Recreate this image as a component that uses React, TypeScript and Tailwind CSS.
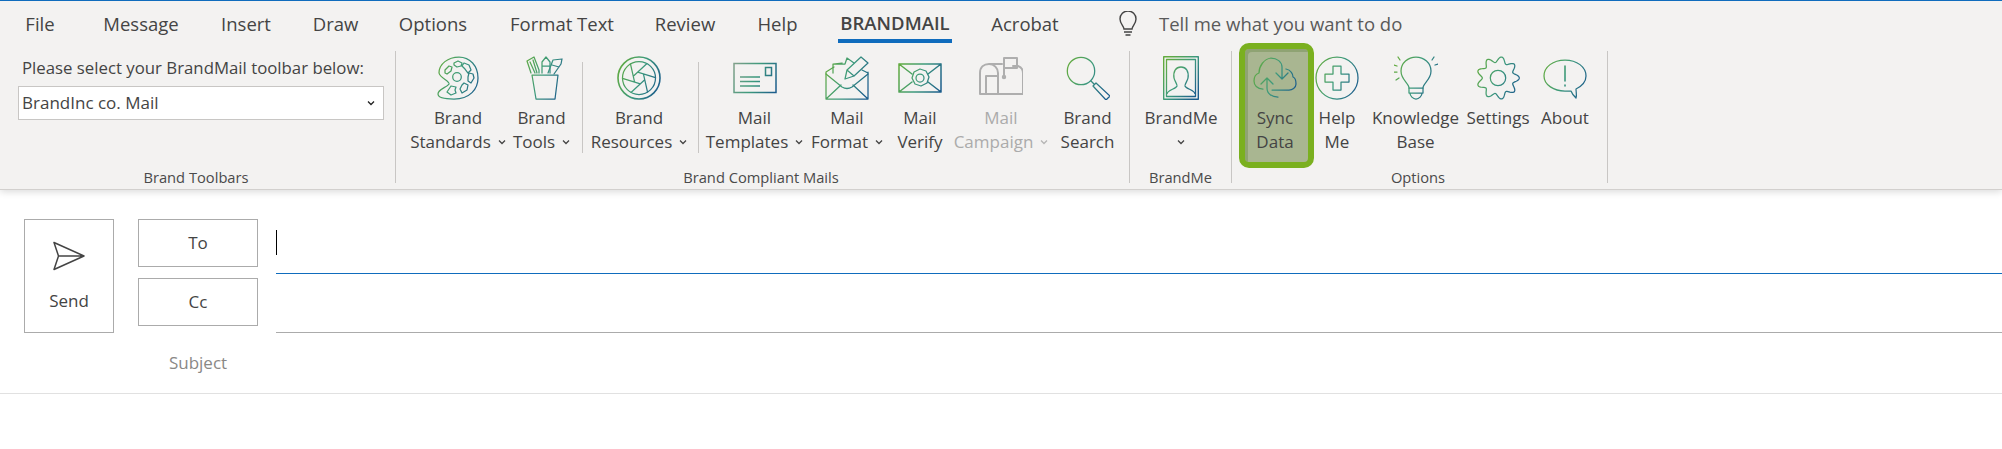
import { ReactNode, useId } from "react";

const Icon = ({ children, muted }: { children: ReactNode; muted?: boolean }) => {
  const id = useId();
  return (
    <svg width="44" height="44" viewBox="0 0 44 44" fill="none" strokeWidth="1.25" strokeLinejoin="round" strokeLinecap="round">
      <defs>
        <linearGradient id={id} gradientUnits="userSpaceOnUse" x1="0" y1="12" x2="44" y2="30">
          <stop offset="0" stopColor="#62ab3f" />
          <stop offset="0.5" stopColor="#3d9a7c" />
          <stop offset="1" stopColor="#1c5d8c" />
        </linearGradient>
      </defs>
      <g stroke={muted ? "#aeaeae" : `url(#${id})`}>{children}</g>
    </svg>
  );
};

const Chevron = ({ color = "#444" }: { color?: string }) => (
  <svg width="8" height="6" viewBox="0 0 8 6" fill="none" className="shrink-0">
    <path d="M1 1.500 4 4.500 7 1.500" stroke={color} strokeWidth="1.3" />
  </svg>
);

const PaletteIcon = () => (
  <Icon>
    <path d="M23 1C34 1 42 10 42 22 42 33 34 43 18 43 8 43 2 41 2 38 2 33 10 32 13 28 14 25 4 22 3 17 3 8 12 1 23 1Z" />
    <circle cx="21" cy="21" r="4.300" />
    <path d="M9 14l4-4 3 1-1 4-4 3-2-1ZM18 7l4-2 4 2-1 3-4 1-3-2ZM28 7l5 2 2 5-3 3-3-4-3-3ZM33 17l4 1 1 4-3 5-3-2 0-4ZM28 27l4 2-1 5-5 3-2-4 2-4ZM15 30l5 1-1 3 1 3-5 2-4-3 2-3Z" />
  </Icon>
);

const ToolsIcon = () => (
  <Icon>
    <path d="M12 19h26l-3 24H16Z" />
    <path d="M11 17 7 5l7-4 5 13v3M10 6l5 11M13 4l4 13" />
    <path d="M22 17V6l4-5 4 5v11M22 10h8" />
    <path d="M28 17l5-13 9-1-1 5-7 10M32 9l7 2" />
  </Icon>
);

// six straight blades around a small hexagon
const apertureBlades = Array.from({ length: 6 }, (_, k) => {
  const a = (k * Math.PI) / 3 + 0.3;
  const b = a + Math.PI / 3;
  const x0 = 6 * Math.cos(a);
  const y0 = 6 * Math.sin(a);
  const dx = 6 * Math.cos(b) - x0;
  const dy = 6 * Math.sin(b) - y0;
  const t = 18.660 / 6;
  return `M${(22 + x0).toFixed(2)} ${(22 + y0).toFixed(2)} L${(22 + x0 + dx * t).toFixed(2)} ${(22 + y0 + dy * t).toFixed(2)}`;
}).join(" ");

const ApertureIcon = () => (
  <Icon>
    <circle cx="22" cy="22" r="21" strokeWidth="1.600" />
    <circle cx="22" cy="22" r="16.500" />
    <path d={apertureBlades} />
  </Icon>
);

const PostcardIcon = () => (
  <svg width="44" height="44" viewBox="0 0 44 44" fill="none">
    <defs>
      <linearGradient id="postcard" gradientUnits="userSpaceOnUse" x1="0" y1="12" x2="44" y2="30">
        <stop offset="0" stopColor="#7fa08a" />
        <stop offset="0.5" stopColor="#3d9a7c" />
        <stop offset="1" stopColor="#1c5d8c" />
      </linearGradient>
    </defs>
    <g stroke="url(#postcard)" strokeWidth="1.500">
      <path d="M1 7.500h42v29H1Z" />
      <path d="M32.500 11.500h6v8h-6Z" />
      <path d="M7 21h20M7 25.500h20M7 30h20" />
    </g>
  </svg>
);

const EnvelopePenIcon = () => (
  <Icon>
    <path d="M1 16v27h42V16M1 43l15-14M43 43 28 29M1 16l8-5M37 14l6 3" />
    <path d="M1 18 17 31q5 3 10 0L43 18" />
    <path d="M8 17V8h12l2-6 7 5M8 8l9-1" />
    <path d="M20 23l2-9L36 1l7 6-14 13-9 3ZM22 14l7 6" />
  </Icon>
);

const VerifyIcon = () => (
  <Icon>
    <path d="M1 8h42v28H1ZM1 8l13 10M43 8 30 18M1 36l13-10M43 36 30 26" strokeWidth="1.500" />
    <path d="M16 16l6-3 6 2 3 6-2 6-6 3-6-2-3-6Z" />
    <circle cx="22" cy="22" r="4" />
  </Icon>
);

const MailboxIcon = () => (
  <Icon muted>
    <path d="M1 38V17C1 11 5 8 10 8h13M10 8c5 0 9 4 9 9v21M1 38h43V17c0-3-2-6-5-7H34" strokeWidth="2" />
    <path d="M7 38V20h11" strokeWidth="2" />
    <path d="M25 21V2h13v10H25" strokeWidth="2" />
    <circle cx="25" cy="21" r="1.600" fill="#aeaeae" />
  </Icon>
);

const SearchIcon = () => (
  <Icon>
    <circle cx="15" cy="15" r="13.700" />
    <path d="M25 25l3 3M27 30l3-3 14 13-4 4Z" />
  </Icon>
);

const BrandMeIcon = () => (
  <svg width="36" height="44" viewBox="0 0 36 44" fill="none">
    <defs>
      <linearGradient id="brandme" gradientUnits="userSpaceOnUse" x1="0" y1="10" x2="36" y2="34">
        <stop offset="0" stopColor="#62ab3f" />
        <stop offset="0.5" stopColor="#3d9a7c" />
        <stop offset="1" stopColor="#1c5d8c" />
      </linearGradient>
    </defs>
    <g stroke="url(#brandme)" strokeWidth="1.300" strokeLinejoin="round">
      <path d="M.7.7h34.600v42.600H.7Z" strokeWidth="1.400" />
      <path d="M3.500 3.500h29v37h-29Z" />
      <path d="M4 38c0-4 9-5 10-8 .4-2-2.500-5-3-8-1-7 2-11 7-11s8 4 7 11c-.5 3-3.400 6-3 8 1 3 10 4 10 8" />
    </g>
  </svg>
);

const SyncIcon = () => (
  <Icon>
    <path d="M10 33C4 33 1 29 1 25 1 21 3 18 6 17 6 10 11 3 18 2 24 2 29 6 29 11V23M23 17l6 6 6-6" />
    <path d="M33 13C38 14 40 18 40 21 43 22 43 25 43 28 43 32 39 34 36 34H19" />
    <path d="M14 22V32C14 38 19 41 25 41M8 28l6-6 6 6" />
  </Icon>
);

const HelpIcon = () => (
  <Icon>
    <circle cx="22" cy="22" r="21" />
    <path d="M18 10h8v8h8v8h-8v8h-8v-8h-8v-8h8Z" />
  </Icon>
);

const BulbIcon = () => (
  <Icon>
    <path d="M15 32c0-5-8-8-8-17C7 7 14 1 22 1s15 6 15 14c0 9-8 12-8 17Z" />
    <path d="M15 32v5h14v-5M16 37c0 3 3 6 6 6s6-3 6-6" />
    <path d="M0 9l3 1M0 16h3M2 24l3-2M4 1l2 3M40 1l-2 3M41 9l3-1" />
  </Icon>
);

const gearPath = Array.from({ length: 181 }, (_, i) => {
  const a = (i / 180) * Math.PI * 2;
  const r = 18.500 + 2.800 * Math.cos(9 * a);
  return `${i === 0 ? "M" : "L"}${(22 + r * Math.cos(a)).toFixed(2)} ${(22 + r * Math.sin(a)).toFixed(2)}`;
}).join(" ");

const GearIcon = () => (
  <Icon>
    <path d={gearPath} />
    <circle cx="22" cy="22" r="7.700" />
  </Icon>
);

const AboutIcon = () => (
  <Icon>
    <path d="M22 4C10 4 1 11 1 20c0 9 10 15 21 15h6c1 3 3 5 5 7 1-3 0-6 0-9 6-3 10-8 10-13C43 11 34 4 22 4Z" />
    <path d="M22 10v15M22 29v1" strokeWidth="1.600" />
  </Icon>
);

const RibbonButton = ({ className, icon, lines, chevron, muted, row }: { className: string; icon: ReactNode; lines: string[]; chevron?: boolean; muted?: boolean; row?: boolean }) => (
  <div className={`relative z-10 flex flex-col items-center whitespace-nowrap leading-[24px] ${muted ? "text-[#ababab]" : ""} ${className}`}>
    <div className="flex h-[50px] items-center justify-center">{icon}</div>
    <div className="mt-[3px]">{lines[0]}</div>
    {lines[1] && (
      <div className="flex items-center gap-[7px]">
        {lines[1]}
        {chevron && <Chevron color={muted ? "#b5b5b5" : "#444"} />}
      </div>
    )}
    {row && (
      <div className="flex h-[24px] items-center">
        <Chevron />
      </div>
    )}
  </div>
);

const Sep = ({ className }: { className: string }) => <div className={`mt-[9px] h-[91px] w-px shrink-0 bg-[#c8c6c4] ${className}`} />;

const GroupLabel = ({ text }: { text: string }) => (
  <div className="mt-auto pb-[1px] text-center text-[14.700px] leading-[10px] text-[#4a4a4a]">{text}</div>
);

const tabs = [
  { name: "File", cls: "ml-[25px] w-[30px]" },
  { name: "Message", cls: "ml-[48px] w-[76px]" },
  { name: "Insert", cls: "ml-[43px] w-[48px]" },
  { name: "Draw", cls: "ml-[43px] w-[45px]" },
  { name: "Options", cls: "ml-[40px] w-[70px]" },
  { name: "Format Text", cls: "ml-[43px] w-[102px]" },
  { name: "Review", cls: "ml-[42px] w-[60px]" },
  { name: "Help", cls: "ml-[43px] w-[39px]" },
];

export default function App() {
  return (
    <div className="min-h-[449px] bg-white font-['Open_Sans',sans-serif] text-[17px] text-[#444]">
      <div className="relative z-20 h-[190px] border-t border-b border-t-[#0f6cbd] border-b-[#d2d0ce] bg-[#f3f2f1] shadow-[0_2px_7px_rgba(0,0,0,0.14)]">
        <div className="flex h-[50px] text-[18.500px] whitespace-nowrap">
          {tabs.map((t) => (
            <div key={t.name} className={`flex h-[46px] items-center justify-center ${t.cls}`}>
              {t.name}
            </div>
          ))}
          <div className="ml-[41px] flex h-[42px] w-[114px] flex-col items-center justify-end">
            <div className="flex h-[32px] items-center font-semibold">BRANDMAIL</div>
            <div className="h-[4px] w-full bg-[#0f6cbd]" />
          </div>
          <div className="ml-[38px] flex h-[46px] w-[70px] items-center justify-center">Acrobat</div>
          <div className="ml-[58px] flex h-[46px] items-center">
            <svg width="20" height="26" viewBox="0 0 20 26" fill="none" stroke="#444" strokeWidth="1.400">
              <path d="M6 18c0-3-4-5-4-10a8 8 0 0 1 16 0c0 5-4 7-4 10ZM6 21h8M7.500 24h5" />
            </svg>
          </div>
          <div className="ml-[21px] flex h-[46px] items-center text-[#5a5a5a]">Tell me what you want to do</div>
        </div>

        <div className="flex h-[132px]">
          <div className="flex w-[396px] shrink-0 flex-col border-r border-[#c8c6c4] pt-[5px] pr-[21px] pl-[18px]">
            <div className="pl-[4px] text-[16.800px] leading-[24px] whitespace-nowrap">Please select your BrandMail toolbar below:</div>
            <div className="mt-[6px] flex h-[34px] w-[366px] shrink-0 items-center justify-between border border-[#c8c6c4] bg-white pr-[8px] pl-[3px] leading-[20px]">
              BrandInc co. Mail
              <Chevron color="#222" />
            </div>
            <GroupLabel text="Brand Toolbars" />
          </div>

          <div className="flex w-[734px] shrink-0 flex-col border-r border-[#c8c6c4]">
            <div className="flex pt-[2px]">
              <RibbonButton className="ml-[16px] w-[92px]" icon={<PaletteIcon />} lines={["Brand", "Standards"]} chevron />
              <RibbonButton className="ml-[10px] w-[55px]" icon={<ToolsIcon />} lines={["Brand", "Tools"]} chevron />
              <Sep className="ml-[13px]" />
              <RibbonButton className="ml-[10px] w-[92px]" icon={<ApertureIcon />} lines={["Brand", "Resources"]} chevron />
              <Sep className="ml-[13px]" />
              <RibbonButton className="ml-[9px] w-[93px]" icon={<PostcardIcon />} lines={["Mail", "Templates"]} chevron />
              <RibbonButton className="ml-[11px] w-[70px]" icon={<EnvelopePenIcon />} lines={["Mail", "Format"]} chevron />
              <RibbonButton className="ml-[16px] w-[44px]" icon={<VerifyIcon />} lines={["Mail", "Verify"]} />
              <RibbonButton className="ml-[12px] w-[94px]" icon={<MailboxIcon />} lines={["Mail", "Campaign"]} chevron muted />
              <RibbonButton className="ml-[14px] w-[51px]" icon={<SearchIcon />} lines={["Brand", "Search"]} />
            </div>
            <div className="mt-auto pr-[3px]">
              <GroupLabel text="Brand Compliant Mails" />
            </div>
          </div>

          <div className="flex w-[102px] shrink-0 flex-col border-r border-[#c8c6c4]">
            <div className="flex pt-[2px]">
              <RibbonButton className="ml-[16px] w-[70px]" icon={<BrandMeIcon />} lines={["BrandMe"]} row />
            </div>
            <GroupLabel text="BrandMe" />
          </div>

          <div className="flex w-[376px] shrink-0 flex-col border-r border-[#c8c6c4]">
            <div className="flex pt-[2px]">
              <div className="relative ml-[7px] w-[75px]">
                <div className="absolute -top-[10px] left-0 h-[125px] w-[75px] rounded-[10px] border-[6px] border-[#7ab01f] bg-[#a9b691] shadow-[inset_3px_3px_0_#8fa373]" />
                <RibbonButton className="w-[72px]" icon={<SyncIcon />} lines={["Sync", "Data"]} />
              </div>
              <RibbonButton className="ml-[2px] w-[42px]" icon={<HelpIcon />} lines={["Help", "Me"]} />
              <RibbonButton className="ml-[14px] w-[87px]" icon={<BulbIcon />} lines={["Knowledge", "Base"]} />
              <RibbonButton className="ml-[8px] w-[62px]" icon={<GearIcon />} lines={["Settings"]} />
              <RibbonButton className="ml-[11px] w-[50px]" icon={<AboutIcon />} lines={["About"]} />
            </div>
            <div className="mt-auto pr-[3px]">
              <GroupLabel text="Options" />
            </div>
          </div>
        </div>
      </div>

      <div className="flex h-[204px] border-b border-[#e1e1e1] pt-[29px] pl-[24px]">
        <div className="flex h-[114px] w-[90px] shrink-0 flex-col items-center border border-[#ababab]">
          <svg width="34" height="30" viewBox="0 0 34 30" fill="none" stroke="#444" strokeWidth="1.500" strokeLinejoin="round" className="mt-[21px]">
            <path d="M2 1.500 32 15 2 28.500 6.500 15ZM6.500 15H32" />
          </svg>
          <div className="mt-[17px]">Send</div>
        </div>
        <div className="ml-[24px] w-[120px] shrink-0">
          <div className="flex h-[48px] items-center justify-center border border-[#ababab]">To</div>
          <div className="mt-[11px] flex h-[48px] items-center justify-center border border-[#ababab]">Cc</div>
          <div className="mt-[26px] text-center leading-[22px] text-[#8a8886]">Subject</div>
        </div>
        <div className="ml-[18px] flex-1">
          <div className="h-[55px] border-b border-[#0f6cbd] pt-[11px]">
            <div className="h-[25px] w-px bg-black" />
          </div>
          <div className="h-[59px] border-b border-[#ababab]" />
        </div>
      </div>
    </div>
  );
}
